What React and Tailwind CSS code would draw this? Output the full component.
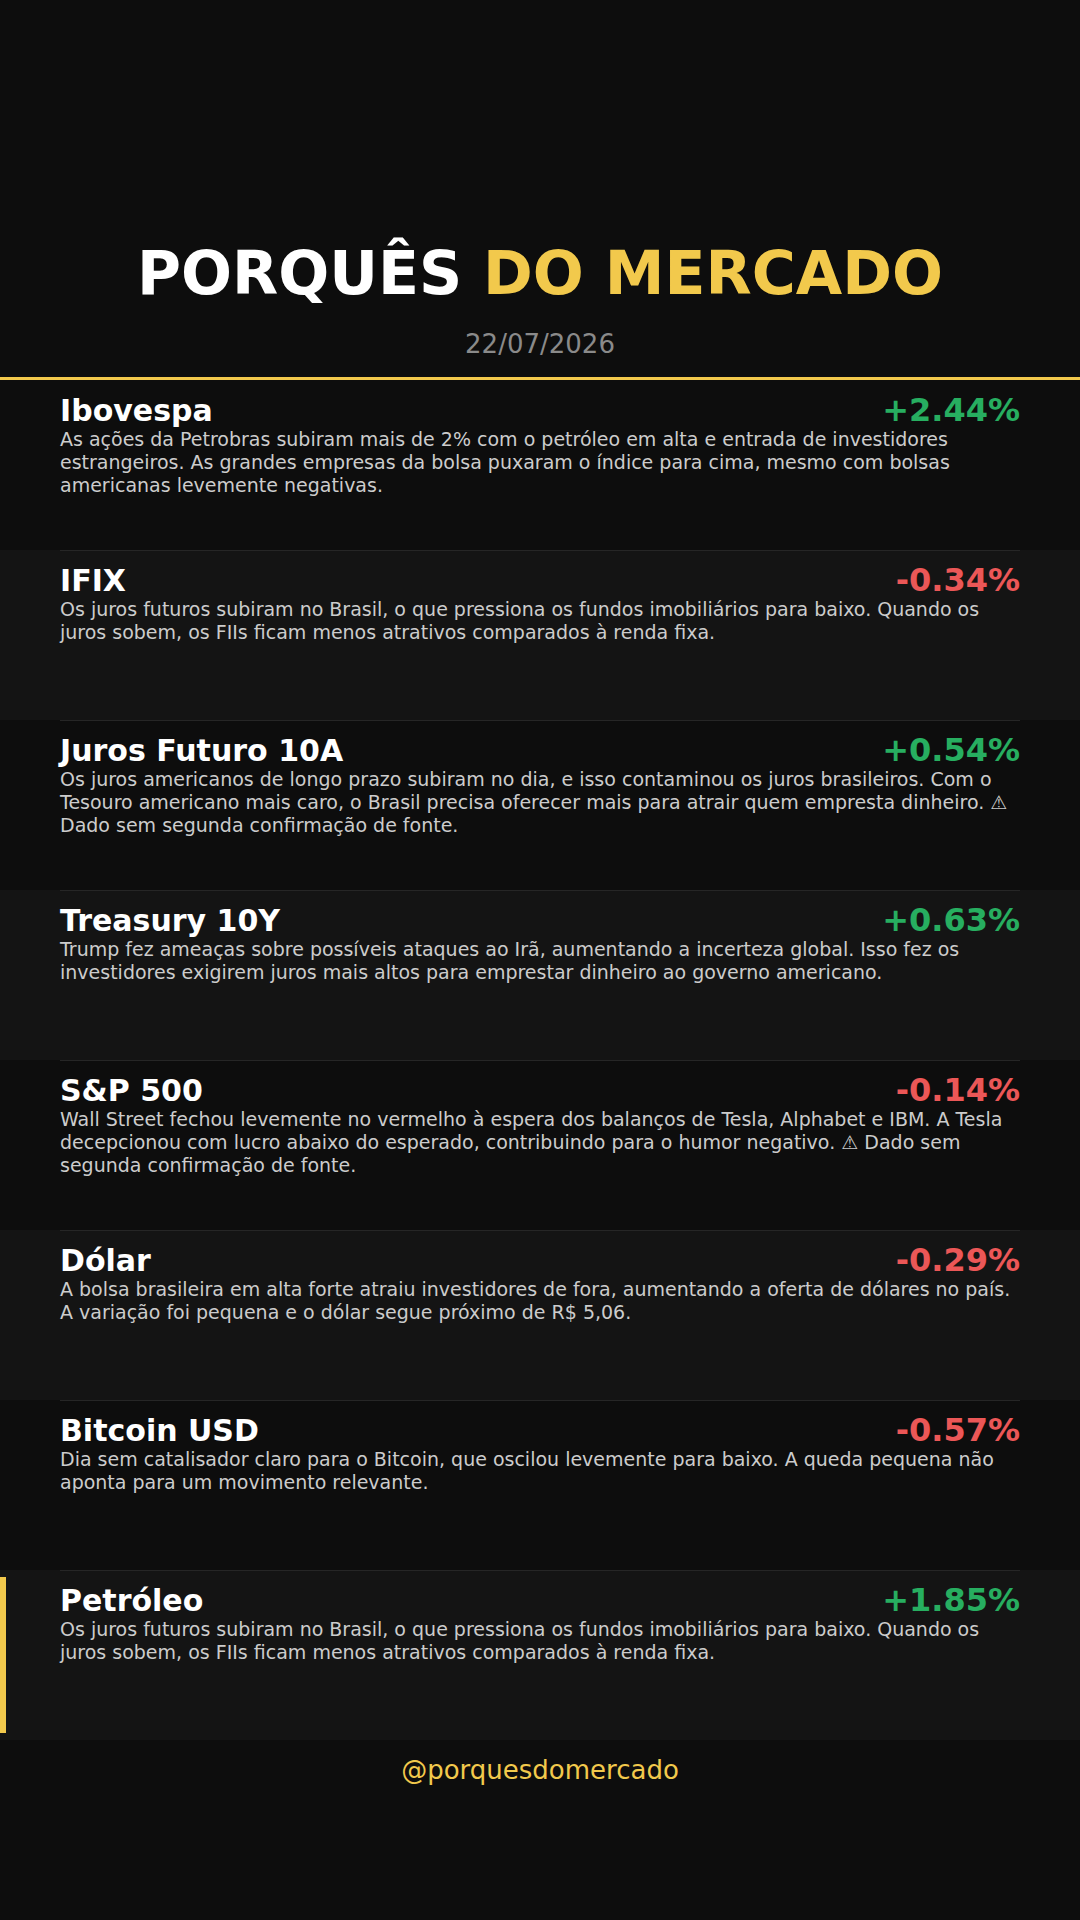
const ROWS = [
  {
    name: "Ibovespa",
    change: "+2.44%",
    up: true,
    text: "As ações da Petrobras subiram mais de 2% com o petróleo em alta e entrada de investidores estrangeiros. As grandes empresas da bolsa puxaram o índice para cima, mesmo com bolsas americanas levemente negativas.",
  },
  {
    name: "IFIX",
    change: "-0.34%",
    up: false,
    text: "Os juros futuros subiram no Brasil, o que pressiona os fundos imobiliários para baixo. Quando os juros sobem, os FIIs ficam menos atrativos comparados à renda fixa.",
  },
  {
    name: "Juros Futuro 10A",
    change: "+0.54%",
    up: true,
    text: "Os juros americanos de longo prazo subiram no dia, e isso contaminou os juros brasileiros. Com o Tesouro americano mais caro, o Brasil precisa oferecer mais para atrair quem empresta dinheiro. ⚠ Dado sem segunda confirmação de fonte.",
  },
  {
    name: "Treasury 10Y",
    change: "+0.63%",
    up: true,
    text: "Trump fez ameaças sobre possíveis ataques ao Irã, aumentando a incerteza global. Isso fez os investidores exigirem juros mais altos para emprestar dinheiro ao governo americano.",
  },
  {
    name: "S&P 500",
    change: "-0.14%",
    up: false,
    text: "Wall Street fechou levemente no vermelho à espera dos balanços de Tesla, Alphabet e IBM. A Tesla decepcionou com lucro abaixo do esperado, contribuindo para o humor negativo. ⚠ Dado sem segunda confirmação de fonte.",
  },
  {
    name: "Dólar",
    change: "-0.29%",
    up: false,
    text: "A bolsa brasileira em alta forte atraiu investidores de fora, aumentando a oferta de dólares no país. A variação foi pequena e o dólar segue próximo de R$ 5,06.",
  },
  {
    name: "Bitcoin USD",
    change: "-0.57%",
    up: false,
    text: "Dia sem catalisador claro para o Bitcoin, que oscilou levemente para baixo. A queda pequena não aponta para um movimento relevante.",
  },
  {
    name: "Petróleo",
    change: "+1.85%",
    up: true,
    highlight: true,
    text: "Os juros futuros subiram no Brasil, o que pressiona os fundos imobiliários para baixo. Quando os juros sobem, os FIIs ficam menos atrativos comparados à renda fixa.",
  },
];

export default function App() {
  return (
    <div
      className="w-[1080px] min-h-[1920px] bg-[#0d0d0d] text-white"
      style={{ fontFamily: '"DejaVu Sans", "Liberation Sans", sans-serif' }}
    >
      {/* header */}
      <div className="h-[380px] flex flex-col items-center pt-[243px] border-b-[3px] border-[#f2c94c]">
        <h1 className="text-[60px] font-bold leading-none tracking-normal">
          PORQUÊS <span className="text-[#f2c94c]">DO MERCADO</span>
        </h1>
        <div className="mt-[28px] text-[26px] leading-none text-[#8a8a8a]">22/07/2026</div>
      </div>

      {ROWS.map((row, i) => (
        <div key={row.name} className={`h-[170px] flex ${i % 2 === 1 ? "bg-[#141414]" : "bg-[#0d0d0d]"}`}>
          <div className="w-[60px] shrink-0 flex py-[7px]">
            {row.highlight && <div className="w-[6px] bg-[#f2c94c]" />}
          </div>
          <div
            className={`flex-1 mr-[60px] border-t pt-[13px] ${
              i === 0 ? "border-transparent" : "border-[#262626]"
            }`}
          >
            <div className="flex items-baseline justify-between">
              <div className="text-[30px] font-bold leading-[32px]">{row.name}</div>
              <div
                className={`text-[32px] font-bold leading-[32px] ${
                  row.up ? "text-[#27ae60]" : "text-[#eb5757]"
                }`}
              >
                {row.change}
              </div>
            </div>
            <p className="mt-[1px] text-[19px] leading-[22.8px] text-[#cccccc]">{row.text}</p>
          </div>
        </div>
      ))}

      {/* footer */}
      <div className="pt-[17px] text-center text-[26px] leading-none text-[#f2c94c]">@porquesdomercado</div>
    </div>
  );
}
